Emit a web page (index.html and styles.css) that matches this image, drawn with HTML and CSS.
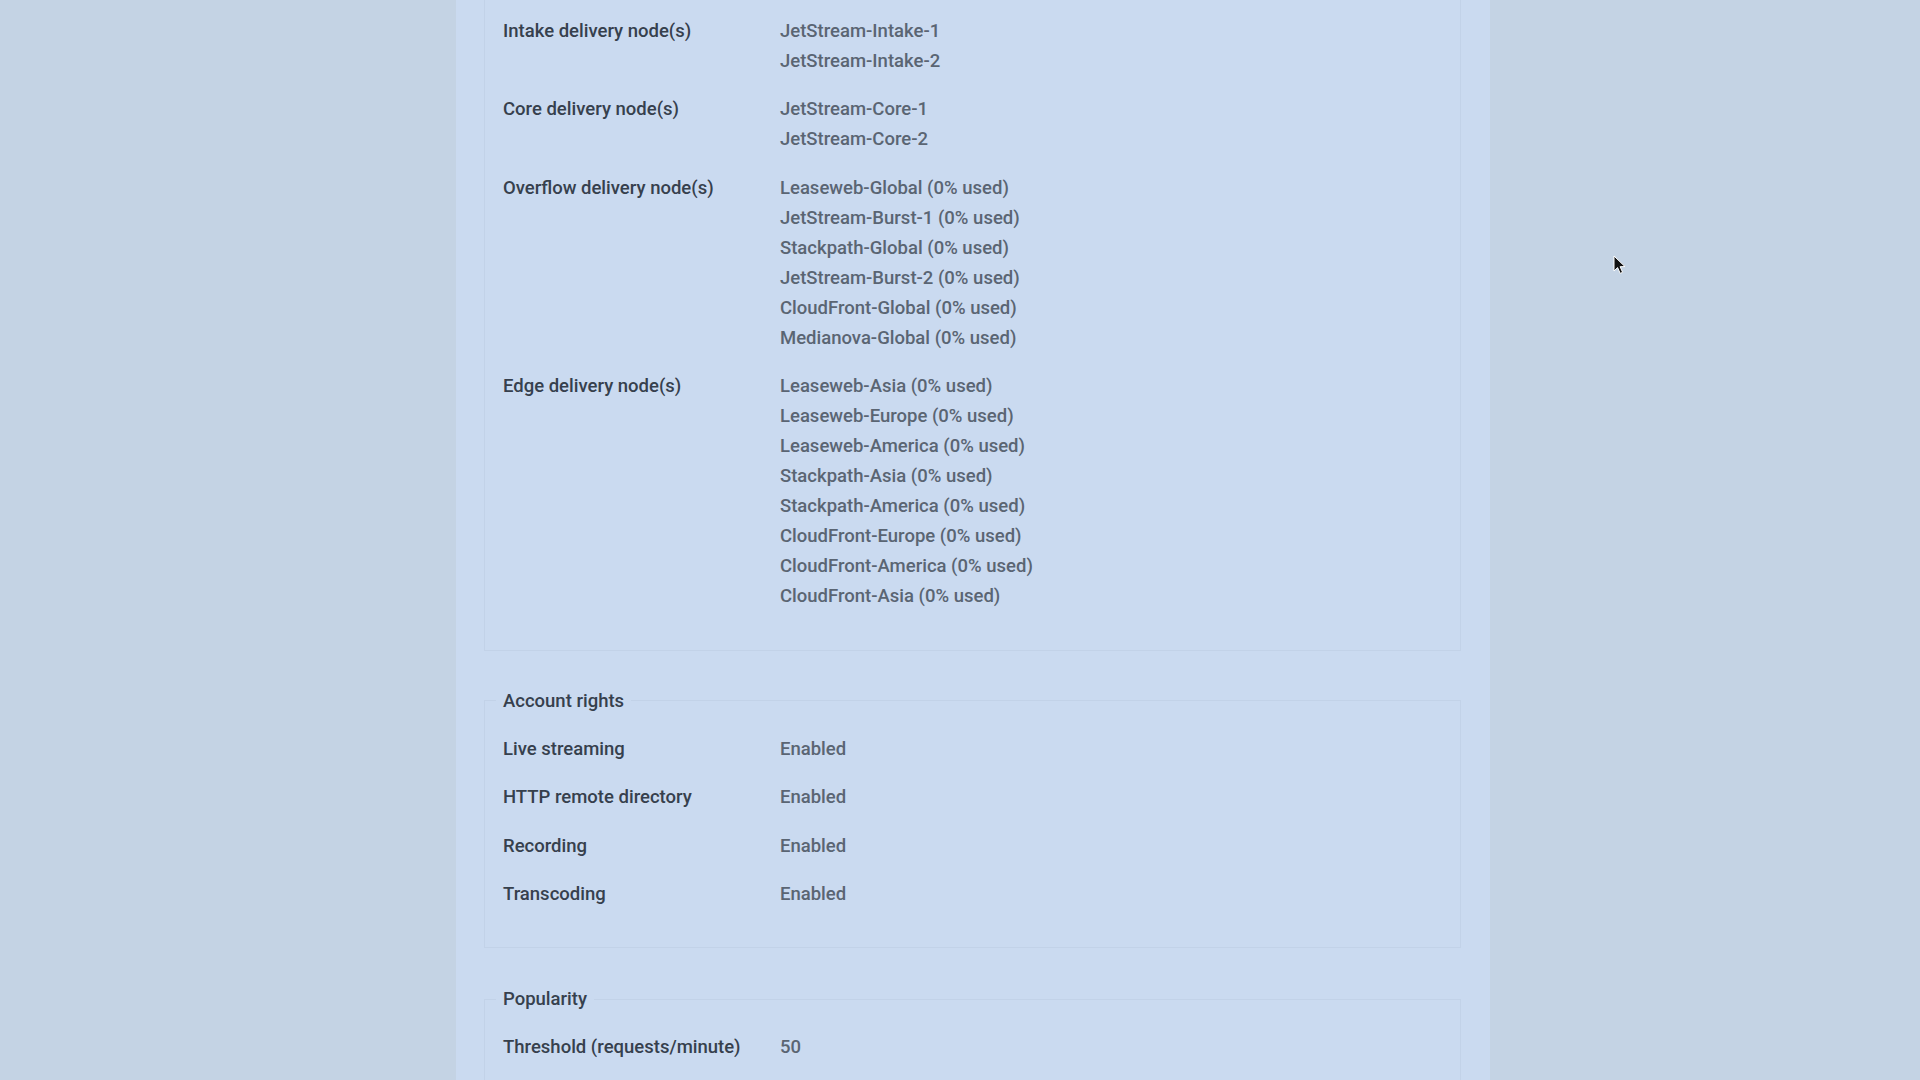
FILE: index.html
```html
<!DOCTYPE html>
<html lang="en">
<head>
<meta charset="utf-8">
<title>Account details</title>
<link rel="stylesheet" href="styles.css">
</head>
<body>
<div class="page">
  <main class="panel">
    <section class="card card-cut">
      <div class="row"><div class="label">Intake delivery node(s)</div><div class="value"><div>JetStream-Intake-1</div><div>JetStream-Intake-2</div></div></div>
      <div class="row"><div class="label">Core delivery node(s)</div><div class="value"><div>JetStream-Core-1</div><div>JetStream-Core-2</div></div></div>
      <div class="row"><div class="label">Overflow delivery node(s)</div><div class="value"><div>Leaseweb-Global (0% used)</div><div>JetStream-Burst-1 (0% used)</div><div>Stackpath-Global (0% used)</div><div>JetStream-Burst-2 (0% used)</div><div>CloudFront-Global (0% used)</div><div>Medianova-Global (0% used)</div></div></div>
      <div class="row"><div class="label">Edge delivery node(s)</div><div class="value"><div>Leaseweb-Asia (0% used)</div><div>Leaseweb-Europe (0% used)</div><div>Leaseweb-America (0% used)</div><div>Stackpath-Asia (0% used)</div><div>Stackpath-America (0% used)</div><div>CloudFront-Europe (0% used)</div><div>CloudFront-America (0% used)</div><div>CloudFront-Asia (0% used)</div></div></div>
    </section>
    <fieldset class="card card-rights">
      <legend class="legend">Account rights</legend>
      <div class="row"><div class="label">Live streaming</div><div class="value">Enabled</div></div>
      <div class="row"><div class="label">HTTP remote directory</div><div class="value">Enabled</div></div>
      <div class="row"><div class="label">Recording</div><div class="value">Enabled</div></div>
      <div class="row"><div class="label">Transcoding</div><div class="value">Enabled</div></div>
    </fieldset>
    <fieldset class="card">
      <legend class="legend">Popularity</legend>
      <div class="row"><div class="label">Threshold (requests/minute)</div><div class="value">50</div></div>
    </fieldset>
  </main>
</div>
<svg class="cursor" width="14" height="20" viewBox="0 0 14 20" aria-hidden="true">
  <path d="M1 1 L1 16 L4.6 12.6 L7.2 18.4 L9.6 17.3 L7.1 11.7 L12 11.6 Z" fill="#111" stroke="#fff" stroke-width="1" stroke-linejoin="round"/>
</svg>
</body>
</html>
```
FILE: styles.css
```css
html, body {
  margin: 0;
  padding: 0;
  height: 100%;
  overflow: hidden;
}
body {
  background: #c4d3e4;
  font-family: Roboto, "Liberation Sans", Arial, sans-serif;
  font-weight: 500;
  font-size: 18.5px;
  line-height: 30px;
}
.page {
  width: 1034px;
  margin-left: 456px;
  min-height: 100%;
  background: #cadaf0;
}
.panel {
  padding: 0 29px 0 28px;
  display: flex;
  flex-direction: column;
}
.card {
  margin: 36px 0 0 0;
  border: 1px solid #c2d2e8;
  padding: 18px 18px 19.5px 18px;
  min-width: 0;
}
.card-rights {
  margin-top: 34.5px;
}
.card-cut {
  margin-top: 0;
  border-top: none;
  padding-top: 15.5px;
  padding-bottom: 20.5px;
}
.legend {
  padding: 0 7px;
  margin-left: -7px;
  color: #36404d;
}
.row {
  display: grid;
  grid-template-columns: 277px 1fr;
  margin-bottom: 18.5px;
}
.label {
  color: #36404d;
}
.value {
  color: #5a6573;
}
.cursor {
  position: absolute;
  left: 1613px;
  top: 255px;
}
```
